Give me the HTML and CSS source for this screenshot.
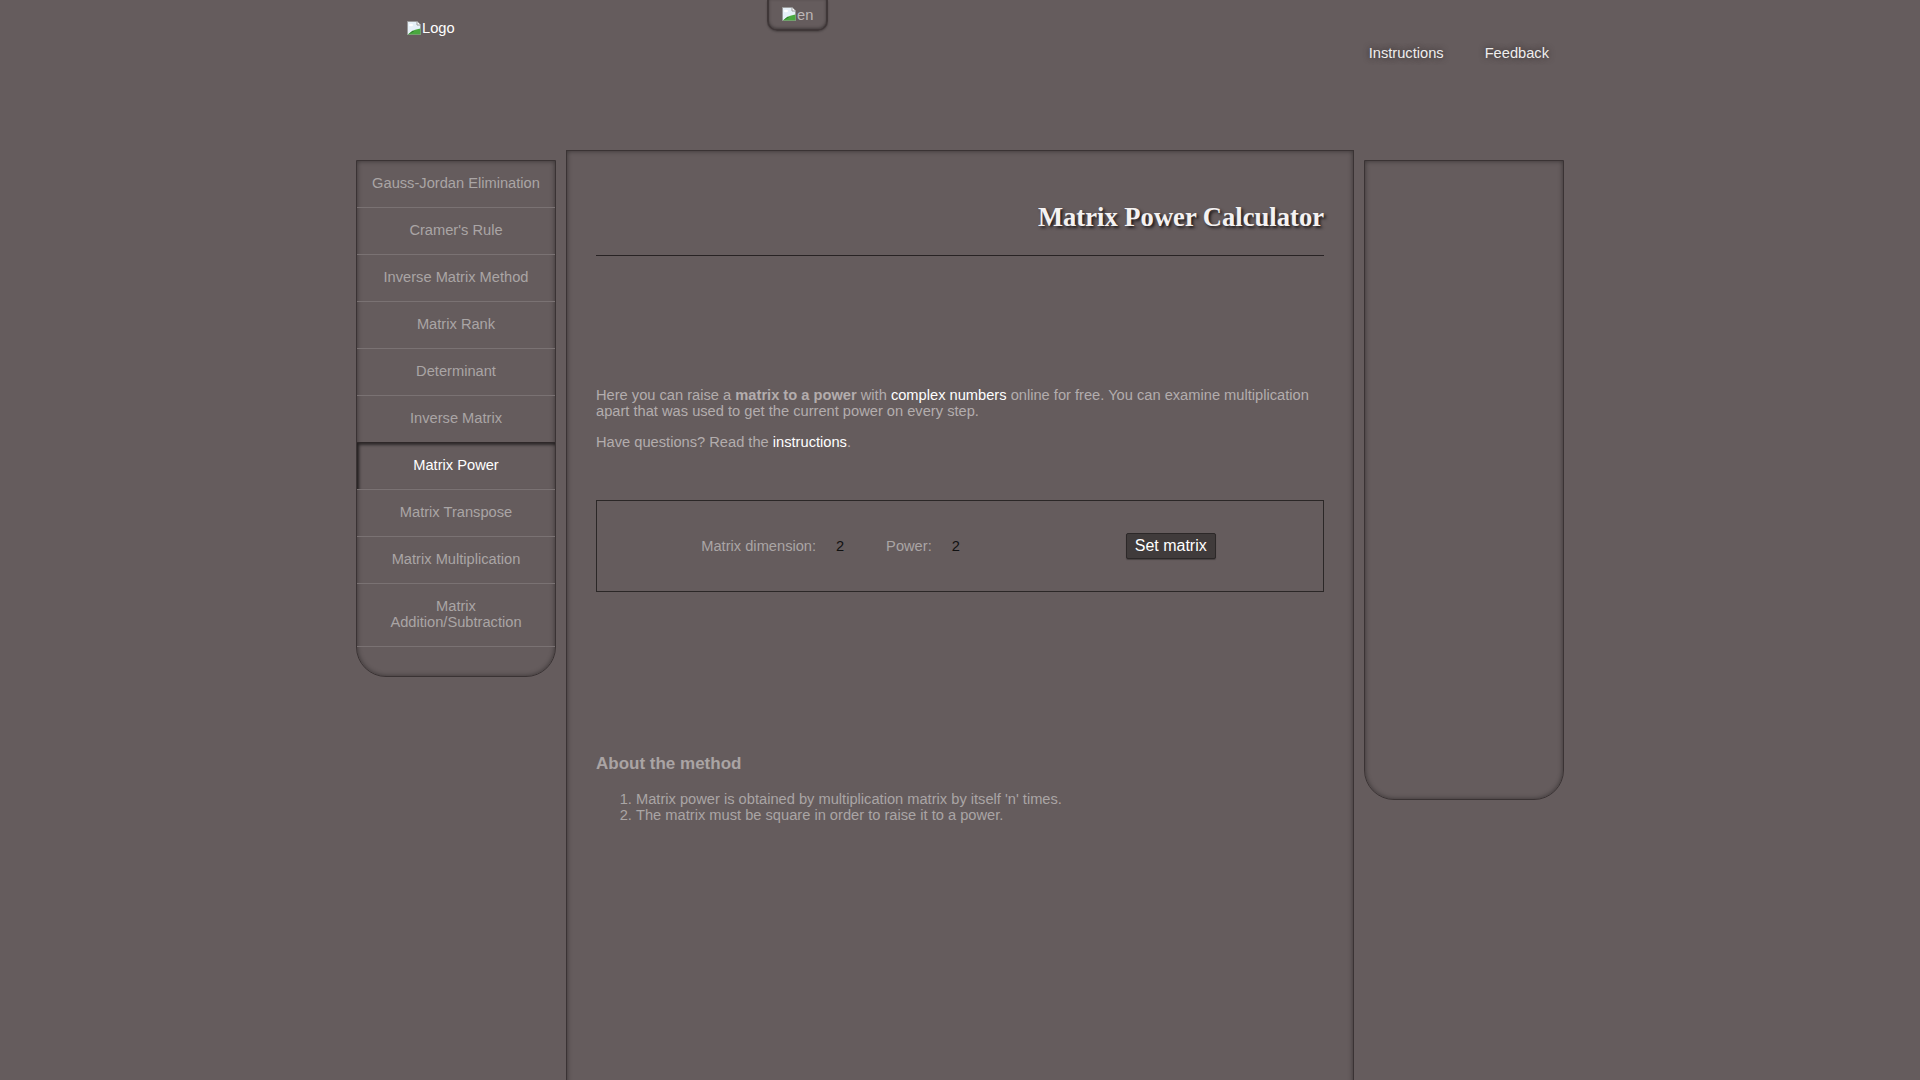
FILE: index.html
```html
<!DOCTYPE html>
<html lang="en">
<head>
<meta charset="utf-8">
<title>Matrix Power Calculator</title>
<link rel="stylesheet" href="styles.css">
</head>
<body>
<div class="page">
  <header class="header">
    <div class="logo">
      <svg class="broken" width="16" height="16" viewBox="0 0 16 16"><path d="M1.5 1.5h9.5l3.5 3.5v9.5h-13z" fill="#e6f0f8" stroke="#9a9a9a"/><path d="M11 1.5v3.5h3.5" fill="#fff" stroke="#9a9a9a"/><path d="M2 14.5c3-3 6-5 12.5-6v6z" fill="#49a83f"/><path d="M2 14.5l5-4 1 1z" fill="#2f7d2a"/><ellipse cx="5" cy="5" rx="2" ry="1.2" fill="#fff"/></svg><span>Logo</span>
    </div>
    <div class="lang">
      <svg class="broken" width="16" height="16" viewBox="0 0 16 16"><path d="M1.5 1.5h9.5l3.5 3.5v9.5h-13z" fill="#e6f0f8" stroke="#9a9a9a"/><path d="M11 1.5v3.5h3.5" fill="#fff" stroke="#9a9a9a"/><path d="M2 14.5c3-3 6-5 12.5-6v6z" fill="#49a83f"/><path d="M2 14.5l5-4 1 1z" fill="#2f7d2a"/><ellipse cx="5" cy="5" rx="2" ry="1.2" fill="#fff"/></svg><span>en</span>
    </div>
    <nav class="nav">
      <a href="#">Instructions</a>
      <a href="#">Feedback</a>
    </nav>
  </header>

  <div class="layout">
    <aside class="menu">
      <a class="item" href="#">Gauss-Jordan Elimination</a>
      <a class="item" href="#">Cramer's Rule</a>
      <a class="item" href="#">Inverse Matrix Method</a>
      <a class="item" href="#">Matrix Rank</a>
      <a class="item" href="#">Determinant</a>
      <a class="item" href="#">Inverse Matrix</a>
      <a class="item active" href="#">Matrix Power</a>
      <a class="item" href="#">Matrix Transpose</a>
      <a class="item" href="#">Matrix Multiplication</a>
      <a class="item" href="#">Matrix Addition/Subtraction</a>
    </aside>

    <main class="main">
      <h1 class="title">Matrix Power Calculator</h1>
      <hr class="rule">
      <p class="intro">Here you can raise a <b>matrix to a power</b> with <a href="#">complex numbers</a> online for free. You can examine multiplication apart that was used to get the current power on every step.</p>
      <p class="intro second">Have questions? Read the <a href="#">instructions</a>.</p>

      <div class="form">
        <span class="label">Matrix dimension:</span>
        <span class="num">2</span>
        <span class="label power">Power:</span>
        <span class="num">2</span>
        <button class="btn" type="button">Set matrix</button>
      </div>

      <h3 class="about">About the method</h3>
      <ol class="list">
        <li>Matrix power is obtained by multiplication matrix by itself 'n' times.</li>
        <li>The matrix must be square in order to raise it to a power.</li>
      </ol>
    </main>

    <aside class="side"></aside>
  </div>
</div>
</body>
</html>
```
FILE: styles.css
```css
html, body {
  margin: 0;
  padding: 0;
}
body {
  background: #655c5d;
  font-family: "Liberation Sans", Arial, sans-serif;
  font-size: 14.67px;
  color: #b0aaaa;
  overflow: hidden;
}
a {
  text-decoration: none;
}
.page {
  width: 1208px;
  margin: 0 auto;
}

/* header */
.header {
  height: 150px;
  display: flex;
  align-items: flex-start;
}
.logo {
  width: 411px;
  box-sizing: border-box;
  padding: 20px 0 0 50px;
  display: flex;
  align-items: flex-start;
  color: #ffffff;
  line-height: 16px;
}
.broken {
  display: block;
  flex: none;
}
.lang {
  width: 61px;
  height: 31px;
  box-sizing: border-box;
  border: 2px solid #3f3738;
  border-top: 0;
  border-radius: 0 0 10px 10px;
  box-shadow: inset 0 -1px 3px rgba(0,0,0,0.35), 0 1px 2px rgba(0,0,0,0.25);
  padding: 6px 0 0 12px;
  display: flex;
  align-items: flex-start;
  color: #bdb7b7;
  line-height: 16px;
}
.lang span {
  margin-top: 1px;
}
.nav {
  margin-left: auto;
  padding: 45px 15px 0 0;
  display: flex;
  gap: 41px;
  line-height: 16px;
}
.nav a {
  color: #efeded;
  text-shadow: 0 0 6px #2e2728;
}

/* columns */
.layout {
  display: flex;
  align-items: flex-start;
  gap: 10px;
}
.menu {
  width: 200px;
  box-sizing: border-box;
  margin-top: 10px;
  border: 1px solid #3a3334;
  border-radius: 0 0 30px 30px;
  box-shadow: inset 0 0 5px rgba(0,0,0,0.45);
  padding-bottom: 29px;
  display: flex;
  flex-direction: column;
}
.item {
  display: block;
  padding: 14px 14px 16px;
  line-height: 16px;
  text-align: center;
  color: #aaa5a5;
  border-bottom: 1px solid #7a7273;
}
.item.active {
  color: #ffffff;
  box-shadow: inset 2px 2px 3px rgba(0,0,0,0.55);
  border-top: 1px solid #2e2829;
  margin-top: -1px;
}

.main {
  width: 788px;
  min-height: 1000px;
  box-sizing: border-box;
  border: 1px solid #3a3334;
  box-shadow: inset 0 0 5px rgba(0,0,0,0.45);
  padding: 0 29px;
}
.title {
  margin: 49px 0 0;
  text-align: right;
  font-family: "Liberation Serif", "Times New Roman", serif;
  font-weight: bold;
  font-size: 26.6px;
  line-height: 34px;
  color: #f4f2f2;
  text-shadow: 2px 2px 3px #1e1a1b;
}
.rule {
  margin: 21px 0 0;
  border: 0;
  border-top: 1px solid #282324;
  height: 0;
}
.intro {
  margin: 131px 0 0;
  font-size: 14.67px;
  line-height: 16px;
  color: #b3adad;
}
.intro.second {
  margin-top: 15px;
}
.intro a {
  color: #ffffff;
}
.form {
  margin-top: 50px;
  height: 92px;
  box-sizing: border-box;
  border: 1px solid #2b2727;
  display: flex;
  align-items: center;
  justify-content: center;
  padding-right: 3px;
}
.label {
  color: #aaa5a5;
}
.num {
  width: 40px;
  box-sizing: border-box;
  padding-left: 5px;
  margin-left: 15px;
  color: #111111;
}
.label.power {
  margin-left: 15px;
}
.btn {
  margin-left: 139px;
  font-family: "Liberation Sans", Arial, sans-serif;
  font-size: 16px;
  line-height: 18px;
  padding: 3px 8px;
  color: #ffffff;
  background: #403b3b;
  border: 1px solid #2c2828;
  border-radius: 2px;
  box-shadow: 0 1px 1px rgba(0,0,0,0.3);
}
.about {
  margin: 162px 0 0;
  font-size: 17px;
  line-height: 19.5px;
  font-weight: bold;
  color: #aaa4a4;
}
.list {
  margin: 17px 0 0;
  padding-left: 40px;
  line-height: 16px;
  color: #aaa5a5;
}

.side {
  width: 200px;
  height: 640px;
  box-sizing: border-box;
  margin-top: 10px;
  border: 1px solid #3a3334;
  border-radius: 0 0 30px 30px;
  box-shadow: inset 0 0 5px rgba(0,0,0,0.45);
}
```
